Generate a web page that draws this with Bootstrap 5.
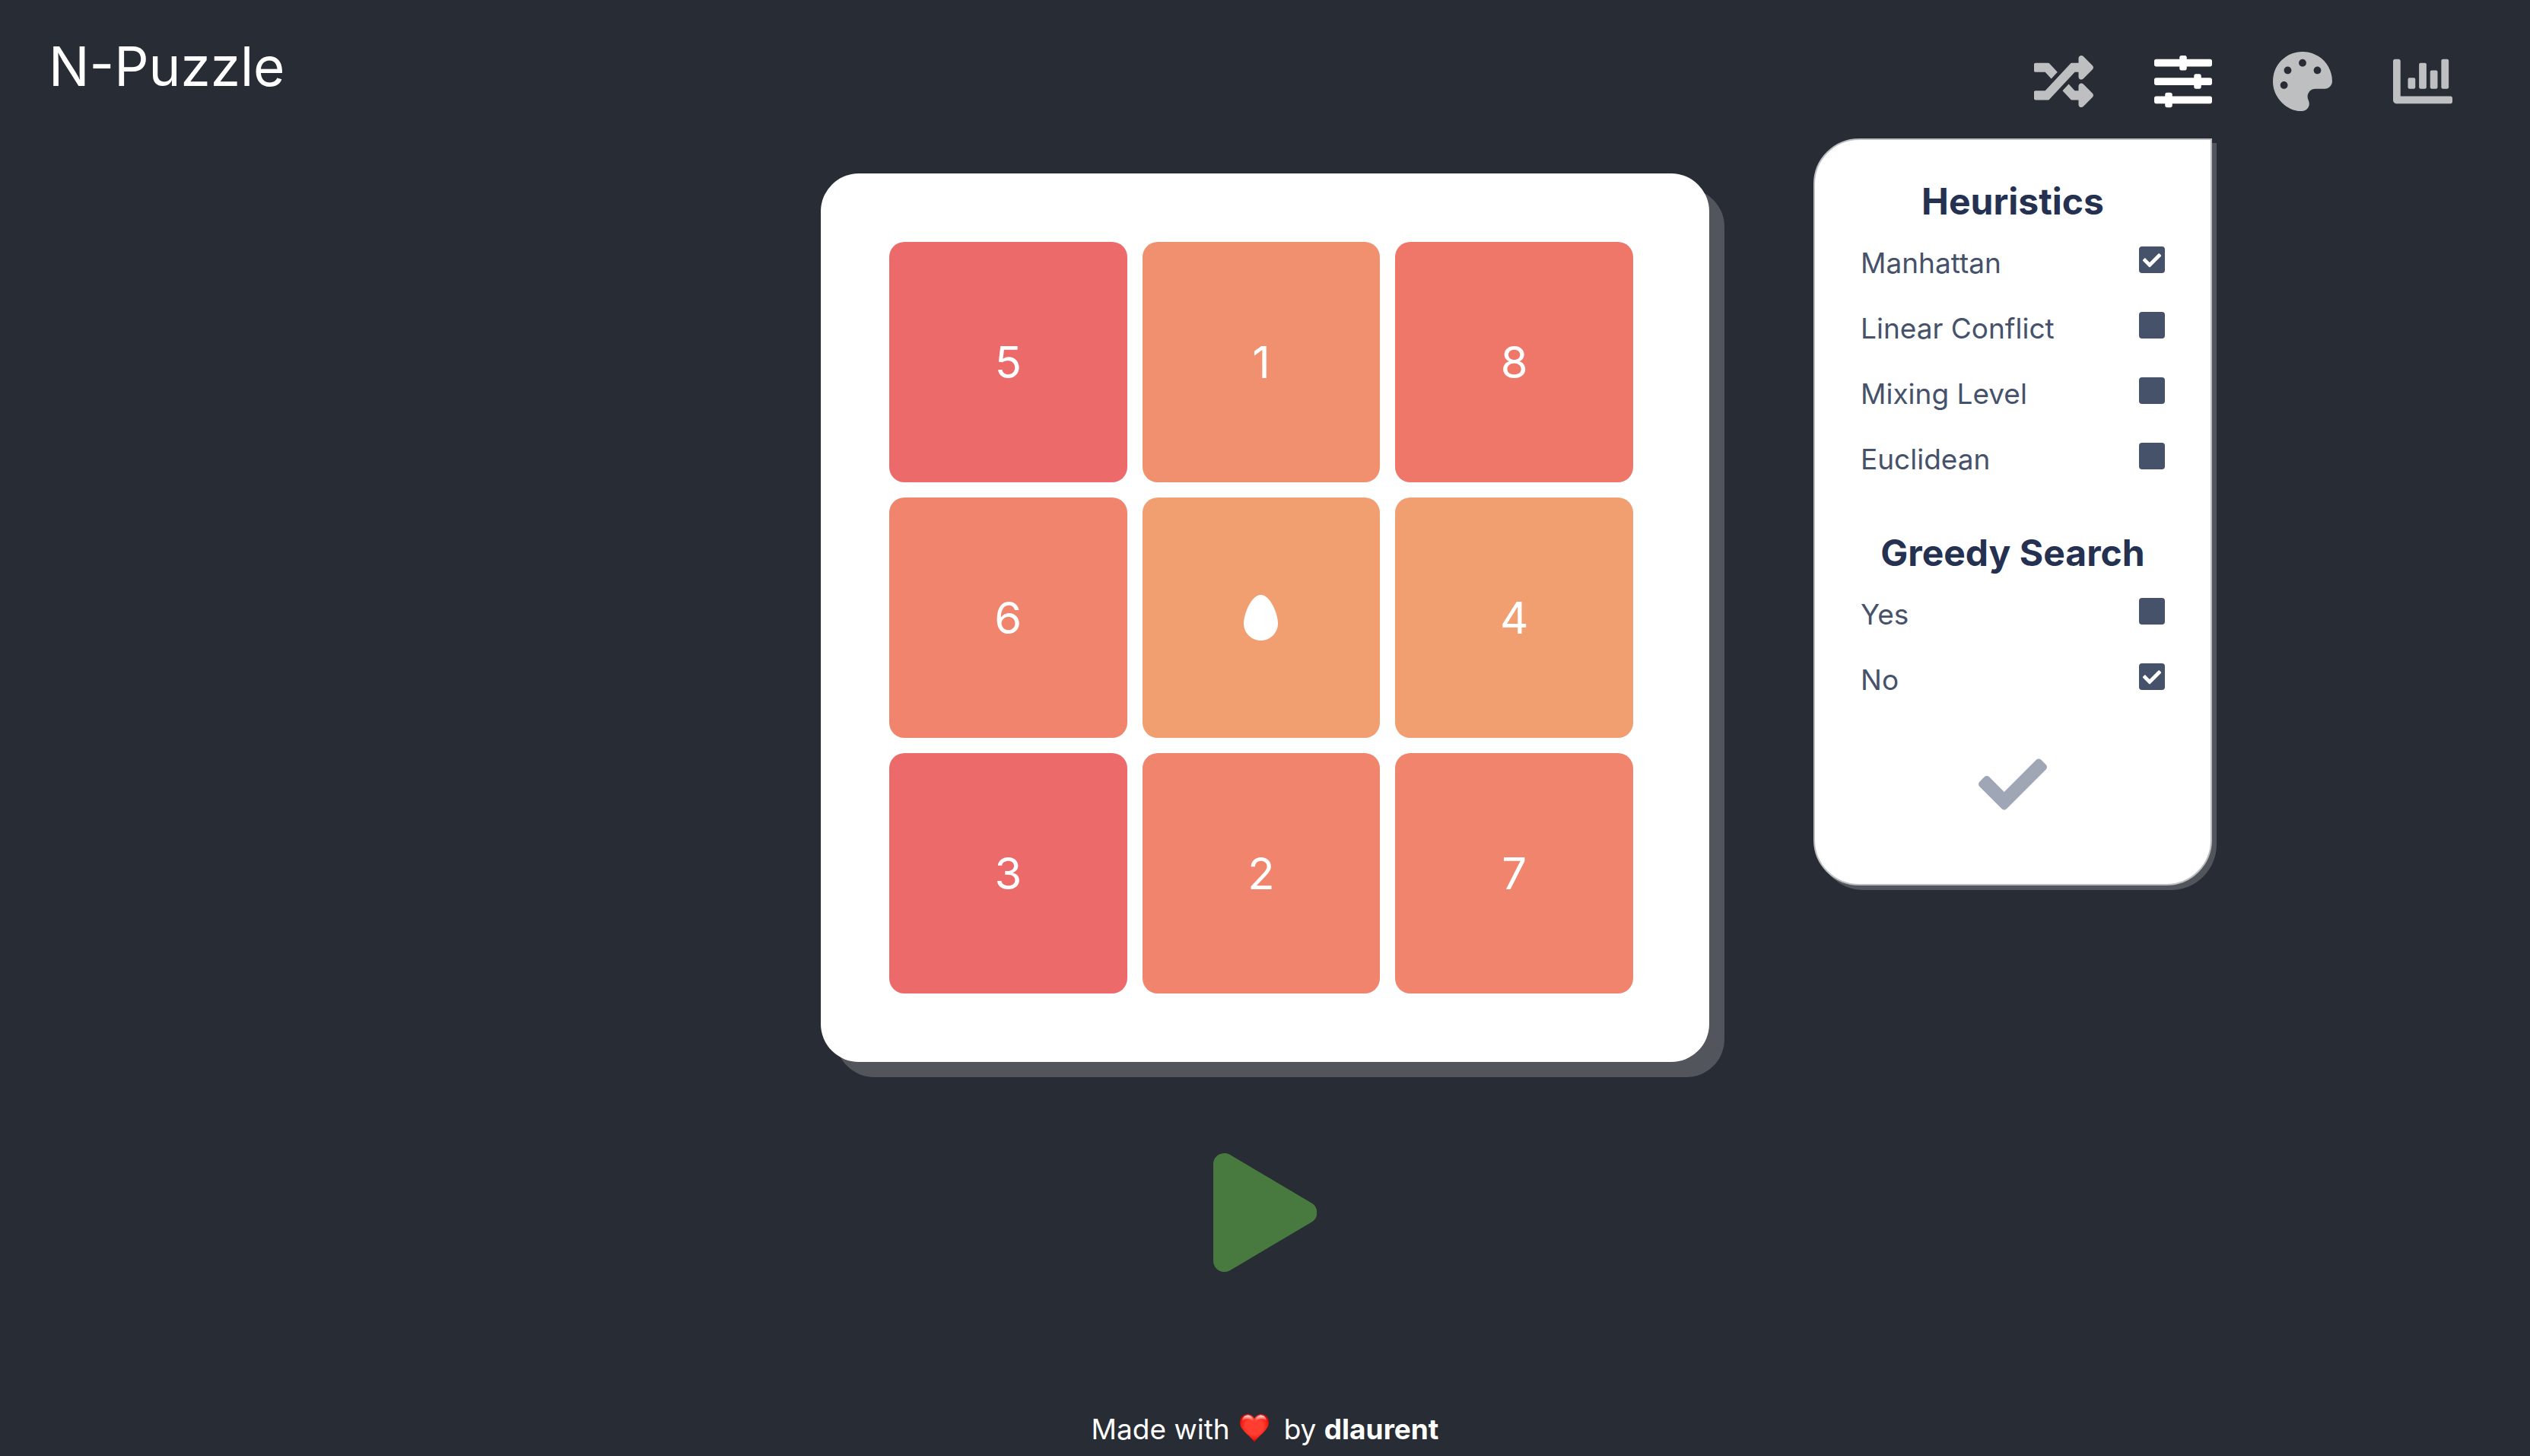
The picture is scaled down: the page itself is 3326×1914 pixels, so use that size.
<!DOCTYPE html>
<html lang="en">
<head>
<meta charset="utf-8">
<meta name="viewport" content="width=device-width, initial-scale=1">
<title>N-Puzzle</title>
<link href="https://cdn.jsdelivr.net/npm/bootstrap@5.3.0/dist/css/bootstrap.min.css" rel="stylesheet">
<style>
  body { background: #282c34; color: #fff; font-family: Inter, "Liberation Sans", sans-serif; font-size: 37px; line-height: 46px; }
  svg { display: block; fill: currentColor; }
  .topbar { padding: 42px 102px 0 64px; }
  .brand { font-size: 71px; line-height: 90px; }
  .tools { gap: 80px; padding-top: 26px; }
  .tool { color: #bebfc1; }
  .tool.active, .tool:hover { color: #fff; }
  .tool svg { width: 78px; height: 78px; }
  .tool.active svg { width: 76px; }
  .options { top: 100%; right: 0; margin-top: 36px; width: 524px; padding: 52px 60px 86px; color: #46516a; background: #fff; border: 2px solid #bdbfc1; border-radius: 60px 0 60px 60px; box-shadow: 6px 6px 0 #52555b; }
  .options h2 { color: #253150; font-size: 48px; line-height: 58px; font-weight: 700; margin-bottom: 29px; }
  .options .option-row + h2 { padding-top: 31px; }
  .option-row { height: 46px; margin-bottom: 40px; }
  .option-row .form-check-input { width: 34px; height: 35px; margin: 0 0 9px; background-color: #46516a; border: 0; border-radius: 4px; }
  .option-row .form-check-input:checked { background-image: url("data:image/svg+xml,%3csvg xmlns='http://www.w3.org/2000/svg' viewBox='0 32 448 448'%3e%3cpath fill='white' d='M195.314 374.628l184-184c6.248-6.248 6.248-16.379 0-22.627l-22.627-22.627c-6.248-6.248-16.379-6.249-22.628 0L184 295.431l-70.059-70.059c-6.248-6.248-16.379-6.248-22.628 0l-22.627 22.627c-6.248 6.248-6.248 16.379 0 22.627l104 104c6.249 6.250 16.379 6.250 22.628.002z'/%3e%3c/svg%3e"); background-size: 100%; }
  .apply { color: #9fa6b6; margin-top: 69px; }
  .apply svg { width: 90px; height: 90px; }
  .stage { padding-top: 82px; }
  .board { width: 1168px; padding: 90px 100px 90px 90px; background: #fff; border-radius: 50px; box-shadow: 20px 20px 0 #52555b; }
  .tiles { display: grid; grid-template-columns: repeat(3, 1fr); grid-auto-rows: 316px; gap: 20px; }
  .tile { border: 0; border-radius: 20px; color: #fff; font-size: 58px; line-height: 70px; }
  .tile svg { height: 60px; }
  .c-a { background: #ed6a6a; }
  .c-b { background: #ee7769; }
  .c-c { background: #f0846c; }
  .c-d { background: #f0906f; }
  .c-e { background: #f19e70; }
  .play { margin-top: 120px; color: #48793f; }
  .play svg { height: 156px; }
  .credits { padding-bottom: 12px; }
  .heart { width: 38px; height: 37px; margin: 0 20px 4px 13px; }
</style>
</head>
<body class="min-vh-100 d-flex flex-column">
<header class="topbar d-flex justify-content-between align-items-start">
  <h1 class="brand fw-normal m-0">N-Puzzle</h1>
  <nav class="tools d-flex" aria-label="Tools">
    <button class="tool btn border-0 p-0" aria-label="Shuffle"><svg viewBox="0 0 512 512"><path d="M504.971 359.029c9.373 9.373 9.373 24.569 0 33.941l-80 79.984c-15.010 15.010-40.971 4.490-40.971-16.971V416h-58.785a12.004 12.004 0 0 1-8.773-3.812l-70.556-75.596 53.333-57.143L352 336h32v-39.981c0-21.438 25.943-31.998 40.971-16.971l80 79.981zM12 176h84l52.781 56.551 53.333-57.143-70.556-75.596A11.999 11.999 0 0 0 122.785 96H12c-6.627 0-12 5.373-12 12v56c0 6.627 5.373 12 12 12zm372 0v39.984c0 21.460 25.961 31.980 40.971 16.971l80-79.984c9.373-9.373 9.373-24.569 0-33.941l-80-79.981C409.943 24.021 384 34.582 384 56.019V96h-58.785a12.004 12.004 0 0 0-8.773 3.812L96 336H12c-6.627 0-12 5.373-12 12v56c0 6.627 5.373 12 12 12h110.785c3.326 0 6.503-1.381 8.773-3.812L352 176h32z"/></svg></button>
    <div class="position-relative">
      <button class="tool active btn border-0 p-0" aria-label="Options" aria-expanded="true"><svg viewBox="0 0 512 512" preserveAspectRatio="none"><path d="M496 384H160v-16c0-8.800-7.200-16-16-16h-32c-8.800 0-16 7.200-16 16v16H16c-8.800 0-16 7.200-16 16v32c0 8.800 7.200 16 16 16h80v16c0 8.800 7.200 16 16 16h32c8.800 0 16-7.200 16-16v-16h336c8.800 0 16-7.200 16-16v-32c0-8.800-7.200-16-16-16zm0-160h-80v-16c0-8.800-7.200-16-16-16h-32c-8.800 0-16 7.200-16 16v16H16c-8.800 0-16 7.200-16 16v32c0 8.800 7.200 16 16 16h336v16c0 8.800 7.200 16 16 16h32c8.800 0 16-7.200 16-16v-16h80c8.800 0 16-7.200 16-16v-32c0-8.800-7.200-16-16-16zm0-160H288V48c0-8.800-7.200-16-16-16h-32c-8.800 0-16 7.200-16 16v16H16C7.200 64 0 71.200 0 80v32c0 8.800 7.200 16 16 16h208v16c0 8.800 7.200 16 16 16h32c8.800 0 16-7.200 16-16v-16h208c8.800 0 16-7.200 16-16V80c0-8.800-7.200-16-16-16z"/></svg></button>
      <form class="options position-absolute">
        <h2 class="text-center">Heuristics</h2>
        <div class="option-row d-flex justify-content-between align-items-center"><label for="manhattan">Manhattan</label><input class="form-check-input" type="checkbox" id="manhattan" checked></div>
        <div class="option-row d-flex justify-content-between align-items-center"><label for="linear">Linear Conflict</label><input class="form-check-input" type="checkbox" id="linear"></div>
        <div class="option-row d-flex justify-content-between align-items-center"><label for="mixing">Mixing Level</label><input class="form-check-input" type="checkbox" id="mixing"></div>
        <div class="option-row d-flex justify-content-between align-items-center"><label for="euclidean">Euclidean</label><input class="form-check-input" type="checkbox" id="euclidean"></div>
        <h2 class="text-center">Greedy Search</h2>
        <div class="option-row d-flex justify-content-between align-items-center"><label for="greedy-yes">Yes</label><input class="form-check-input" type="checkbox" id="greedy-yes"></div>
        <div class="option-row d-flex justify-content-between align-items-center"><label for="greedy-no">No</label><input class="form-check-input" type="checkbox" id="greedy-no" checked></div>
        <button type="button" class="apply btn border-0 p-0 d-block mx-auto" aria-label="Apply"><svg viewBox="0 0 512 512"><path d="M173.898 439.404l-166.400-166.400c-9.997-9.997-9.997-26.206 0-36.204l36.203-36.204c9.997-9.998 26.207-9.998 36.204 0L192 312.690 432.095 72.596c9.997-9.997 26.207-9.997 36.204 0l36.203 36.204c9.997 9.997 9.997 26.206 0 36.204l-294.400 294.401c-9.998 9.997-26.207 9.997-36.204-.001z"/></svg></button>
      </form>
    </div>
    <button class="tool btn border-0 p-0" aria-label="Colours"><svg viewBox="0 0 512 512"><path d="M204.300 5C104.900 24.400 24.800 104.300 5.200 203.400c-37 187 131.700 326.400 258.800 306.700 41.200-6.400 61.400-54.600 42.500-91.700-23.100-45.400 9.900-98.400 60.900-98.400h79.700c35.800 0 64.800-29.600 64.900-65.300C511.500 97.100 368.100-26.900 204.300 5zM96 320c-17.700 0-32-14.300-32-32s14.300-32 32-32 32 14.300 32 32-14.300 32-32 32zm32-128c-17.700 0-32-14.300-32-32s14.300-32 32-32 32 14.300 32 32-14.300 32-32 32zm128-64c-17.700 0-32-14.300-32-32s14.300-32 32-32 32 14.300 32 32-14.300 32-32 32zm128 64c-17.700 0-32-14.300-32-32s14.300-32 32-32 32 14.300 32 32-14.300 32-32 32z"/></svg></button>
    <button class="tool btn border-0 p-0" aria-label="Statistics"><svg viewBox="0 0 512 512"><path d="M332.800 320h38.400c6.400 0 12.800-6.400 12.800-12.800V172.800c0-6.400-6.400-12.800-12.800-12.800h-38.400c-6.400 0-12.800 6.400-12.800 12.800v134.400c0 6.400 6.400 12.800 12.800 12.800zm96 0h38.400c6.400 0 12.800-6.400 12.800-12.800V76.800c0-6.400-6.400-12.800-12.800-12.800h-38.400c-6.400 0-12.800 6.400-12.800 12.800v230.400c0 6.400 6.400 12.800 12.800 12.800zm-288 0h38.400c6.400 0 12.800-6.400 12.800-12.800v-70.400c0-6.400-6.400-12.800-12.800-12.800h-38.400c-6.400 0-12.800 6.400-12.800 12.800v70.400c0 6.400 6.400 12.800 12.800 12.800zm96 0h38.400c6.400 0 12.800-6.400 12.800-12.800V108.800c0-6.400-6.400-12.800-12.800-12.800h-38.400c-6.400 0-12.800 6.400-12.800 12.800v198.400c0 6.400 6.400 12.800 12.800 12.800zM496 384H64V80c0-8.840-7.160-16-16-16H16C7.160 64 0 71.160 0 80v336c0 17.670 14.330 32 32 32h464c8.840 0 16-7.160 16-16v-32c0-8.840-7.160-16-16-16z"/></svg></button>
  </nav>
</header>
<main class="stage d-flex flex-column align-items-center flex-grow-1">
  <section class="board" aria-label="Puzzle">
    <div class="tiles">
      <button class="tile c-a">5</button>
      <button class="tile c-d">1</button>
      <button class="tile c-b">8</button>
      <button class="tile c-c">6</button>
      <button class="tile c-e d-flex align-items-center justify-content-center" aria-label="Empty"><svg viewBox="0 0 384 512"><path d="M192 0C86 0 0 214 0 320s86 192 192 192 192-86 192-192S298 0 192 0z"/></svg></button>
      <button class="tile c-e">4</button>
      <button class="tile c-a">3</button>
      <button class="tile c-c">2</button>
      <button class="tile c-c">7</button>
    </div>
  </section>
  <button class="play btn border-0 p-0" aria-label="Play"><svg viewBox="0 0 448 512"><path d="M424.400 214.700L72.400 6.600C43.800-10.300 0 6.100 0 47.900V464c0 37.500 40.700 60.100 72.400 41.300l352-208c31.400-18.500 31.500-64.100 0-82.600z"/></svg></button>
</main>
<footer class="credits d-flex justify-content-center align-items-center">
  <span>Made with</span>
  <svg class="heart" viewBox="0 0 38 37" role="img" aria-label="love">
    <defs>
      <linearGradient id="gloss" x1="0" y1="0" x2="0" y2="1"><stop offset="0" stop-color="#fff" stop-opacity=".95"/><stop offset="1" stop-color="#ff8a80" stop-opacity="0"/></linearGradient>
      <radialGradient id="heart-fill" cx=".5" cy=".42" r=".55"><stop offset=".55" stop-color="#ff3e31"/><stop offset=".85" stop-color="#f01a10"/><stop offset="1" stop-color="#b80805"/></radialGradient>
    </defs>
    <path fill="url(#heart-fill)" d="M19 37C17 33 13 30 9 26 4 21 0 17 0 10.500 0 4 4.500 0 10 0c4 0 7.500 2.500 9 6 1.500-3.500 5-6 9-6 5.500 0 10 4 10 10.500C38 17 34 21 29 26c-4 4-8 7-10 11z"/>
    <path fill="url(#gloss)" d="M2.500 10C3 4.500 6 1.500 10 1.500s7 2.500 8 7.500c-3-1-5-3-8-3s-6 2-7.500 4zM35.500 10c-.5-5.500-3.500-8.500-7.500-8.500s-7 2.500-8 7.500c3-1 5-3 8-3s6 2 7.500 4z"/>
  </svg>
  <span>by <a class="fw-bold text-white text-decoration-none" href="#">dlaurent</a></span>
</footer>
<script src="https://cdn.jsdelivr.net/npm/bootstrap@5.3.0/dist/js/bootstrap.bundle.min.js"></script>
</body>
</html>
